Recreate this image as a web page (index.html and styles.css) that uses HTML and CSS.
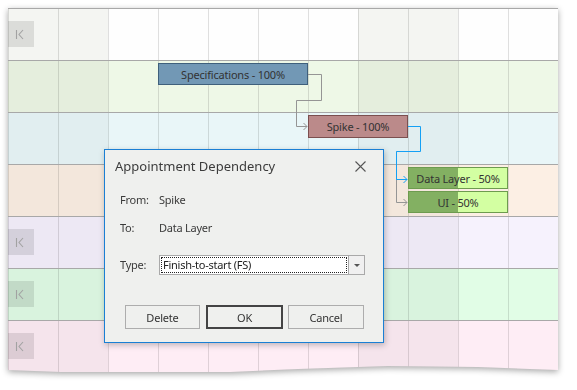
FILE: index.html
```html
<!DOCTYPE html>
<html lang="en">
<head>
  <meta charset="UTF-8" />
  <title>Appointment Dependency</title>
  <link rel="stylesheet" href="styles.css">
</head>
<body>

  <div class="sheet">
    <div class="scheduler">

      <!-- Resource rows -->
      <div class="row r1">
        <i class="we"></i><i class="we"></i><i></i><i></i><i></i><i></i><i></i><i class="we"></i><i class="we"></i><i></i><i></i>
        <span class="nav-btn"><svg width="26" height="26" viewBox="0 0 26 26"><path d="M8.5 9v9M15 9l-4 4.5 4 4.5" /></svg></span>
      </div>
      <div class="row r2">
        <i class="we"></i><i class="we"></i><i></i><i></i><i></i><i></i><i></i><i class="we"></i><i class="we"></i><i></i><i></i>
      </div>
      <div class="row r3">
        <i class="we"></i><i class="we"></i><i></i><i></i><i></i><i></i><i></i><i class="we"></i><i class="we"></i><i></i><i></i>
      </div>
      <div class="row r4">
        <i class="we"></i><i class="we"></i><i></i><i></i><i></i><i></i><i></i><i class="we"></i><i class="we"></i><i></i><i></i>
      </div>
      <div class="row r5">
        <i class="we"></i><i class="we"></i><i></i><i></i><i></i><i></i><i></i><i class="we"></i><i class="we"></i><i></i><i></i>
        <span class="nav-btn"><svg width="26" height="26" viewBox="0 0 26 26"><path d="M8.5 9v9M15 9l-4 4.5 4 4.5" /></svg></span>
      </div>
      <div class="row r6">
        <i class="we"></i><i class="we"></i><i></i><i></i><i></i><i></i><i></i><i class="we"></i><i class="we"></i><i></i><i></i>
        <span class="nav-btn"><svg width="26" height="26" viewBox="0 0 26 26"><path d="M8.5 9v9M15 9l-4 4.5 4 4.5" /></svg></span>
      </div>
      <div class="row r7">
        <i class="we"></i><i class="we"></i><i></i><i></i><i></i><i></i><i></i><i class="we"></i><i class="we"></i><i></i><i></i>
        <span class="nav-btn"><svg width="26" height="26" viewBox="0 0 26 26"><path d="M8.5 9v9M15 9l-4 4.5 4 4.5" /></svg></span>
      </div>

      <!-- Dependency links -->
      <svg class="links" width="550" height="370" viewBox="0 0 550 370">
        <g class="link">
          <path d="M300 66.5H313.5V92.5H288.5V118.5H299" />
          <path d="M295.5 115l3.5 3.5-3.5 3.5" />
          <path d="M388.5 143.5V194.5H399" />
          <path d="M395.5 191l3.5 3.5-3.5 3.5" />
        </g>
        <g class="link selected">
          <path d="M400 118.5H412.5V143.5H388.5V171.5H399" />
          <path d="M395.5 168l3.5 3.5-3.5 3.5" />
        </g>
      </svg>

      <!-- Appointments -->
      <div class="appt spec">Specifications - 100%</div>
      <div class="appt spike">Spike - 100%</div>
      <div class="appt half data">Data Layer - 50%</div>
      <div class="appt half ui">UI - 50%</div>

      <!-- Dialog -->
      <div class="dialog">
        <div class="dlg-head">
          <span class="dlg-title">Appointment Dependency</span>
          <svg class="dlg-close" width="11" height="11" viewBox="0 0 11 11"><path d="M0.5 0.5l10 10M10.5 0.5l-10 10" /></svg>
        </div>
        <div class="dlg-body">
          <div class="field"><span class="label">From:</span><span>Spike</span></div>
          <div class="field"><span class="label">To:</span><span>Data Layer</span></div>
          <div class="field type">
            <span class="label">Type:</span>
            <div class="combo">
              <span class="combo-text">Finish-to-start (FS)</span>
              <span class="combo-btn"><i class="caret"></i></span>
            </div>
          </div>
        </div>
        <div class="dlg-buttons">
          <button class="btn delete">Delete</button>
          <button class="btn ok">OK</button>
          <button class="btn cancel">Cancel</button>
        </div>
      </div>

    </div>
  </div>

</body>
</html>
```

FILE: styles.css
```css
* {
  box-sizing: border-box;
  margin: 0;
  padding: 0;
}

body {
  background: #fff;
  font-family: 'Noto Sans', 'Open Sans', sans-serif;
  color: #333;
}

.sheet {
  margin: 8px;
  width: 550px;
  filter: drop-shadow(0 2px 3px rgba(0, 0, 0, 0.35));
}

.scheduler {
  position: relative;
  width: 550px;
  height: 370px;
  overflow: hidden;
  clip-path: polygon(0 0, 550px 0, 550px 362px, 470px 359px, 380px 358px, 290px 361px, 200px 365px, 140px 366px, 80px 365px, 0 362px);
}

/* rows and cells */
.row {
  position: relative;
  display: flex;
  height: 52px;
  border-top: 1px solid #a8a8a8;
}

.row i {
  width: 50px;
  border-left: 1px solid rgba(0, 0, 0, 0.12);
  background: var(--light);
}

.row i.we {
  background: var(--dark);
}

.r1 { --light: #fefefe; --dark: #f4f5f2; }
.r2 { --light: #eef8e7; --dark: #e5eedd; }
.r3 { --light: #e9f6f8; --dark: #e1eef0; }
.r4 { --light: #fcefe4; --dark: #f3e7dc; }
.r5 { --light: #f6f2fd; --dark: #ede8f4; }
.r6 { --light: #e1fde6; --dark: #d9f3de; }
.r7 { --light: #feedf5; --dark: #f5e4ec; }

.nav-btn {
  position: absolute;
  left: 0;
  top: 12px;
  width: 26px;
  height: 26px;
  background: rgba(0, 0, 0, 0.1);
}

.nav-btn svg {
  display: block;
  fill: none;
  stroke: #a2a2a2;
  stroke-width: 1.1;
}

/* links */
.links {
  position: absolute;
  left: 0;
  top: 0;
  fill: none;
}

.link {
  stroke: #959595;
  stroke-width: 1;
}

.link.selected {
  stroke: #14a0f5;
}

/* appointments */
.appt {
  position: absolute;
  height: 22px;
  border: 1px solid;
  display: flex;
  align-items: center;
  justify-content: center;
  font-size: 11px;
  letter-spacing: -0.2px;
  color: #333;
  white-space: nowrap;
}

.spec {
  left: 150px;
  top: 55px;
  width: 150px;
  background: #7298b5;
  border-color: #3f607c;
}

.spike {
  left: 300px;
  top: 107px;
  width: 100px;
  height: 23px;
  background: #bb8a8a;
  border-color: #7b4f4f;
}

.half {
  left: 400px;
  width: 100px;
  background: linear-gradient(to right, #83b062 50%, #d3ffa2 50%);
  border-color: #6d9b4f;
}

.data { top: 159px; }
.ui { top: 183px; }

/* dialog */
.dialog {
  position: absolute;
  left: 96px;
  top: 141px;
  width: 280px;
  height: 194px;
  background: #eff0ee;
  border: 1px solid #1a7fd4;
  box-shadow: 1px 2px 6px rgba(0, 0, 0, 0.25);
}

.dlg-head {
  display: flex;
  align-items: center;
  justify-content: space-between;
  height: 26px;
  margin-top: 3px;
  padding: 0 17px 0 10px;
}

.dlg-title {
  font-size: 13px;
  line-height: 26px;
  color: #3c3c3c;
}

.dlg-close {
  fill: none;
  stroke: #555;
  stroke-width: 1.1;
}

.dlg-body {
  padding: 13px 18px 0 15px;
  font-size: 11px;
  letter-spacing: -0.25px;
}

.field {
  display: flex;
  align-items: center;
  line-height: 16px;
  margin-bottom: 12px;
  color: #3a3a3a;
}

.label {
  width: 39px;
  flex: none;
}

.field.type {
  margin-top: 19px;
  margin-bottom: 0;
}

.combo {
  flex: 1;
  display: flex;
  height: 20px;
  border: 1px solid #a9a9a9;
  background: #fff;
}

.combo-text {
  flex: 1;
  margin: 1px;
  padding-left: 1px;
  border: 1px dotted #222;
  line-height: 14px;
  color: #222;
}

.combo-btn {
  width: 16px;
  border-left: 1px solid #a9a9a9;
  background: #f0f0f0;
  display: flex;
  align-items: center;
  justify-content: center;
}

.caret {
  width: 0;
  height: 0;
  border-left: 3px solid transparent;
  border-right: 3px solid transparent;
  border-top: 3px solid #555;
}

.dlg-buttons {
  display: flex;
  margin-top: 30px;
  padding-left: 20px;
}

.btn {
  height: 24px;
  font-family: inherit;
  font-size: 11px;
  letter-spacing: -0.2px;
  color: #333;
  background: #eff0ee;
  border: 1px solid #adadad;
}

.delete { width: 75px; }
.ok { width: 77px; margin-left: 6px; border: 2px solid #444; }
.cancel { width: 76px; margin-left: 5px; }
```
